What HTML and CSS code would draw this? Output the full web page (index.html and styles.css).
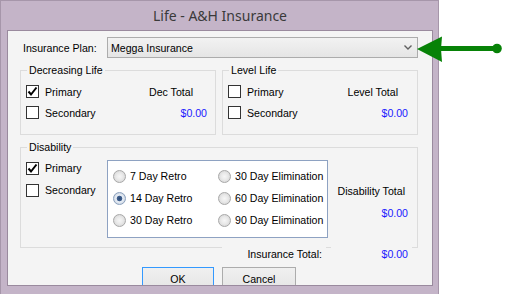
FILE: index.html
```html
<!DOCTYPE html>
<html lang="en">
<head>
    <meta charset="UTF-8">
    <title>Life - A&amp;H Insurance</title>
    <link rel="stylesheet" href="styles.css">
</head>
<body>
    <div class="window">
        <div class="titlebar">Life - A&amp;H Insurance</div>
        <div class="client">
            <div class="plan-row">
                <span class="plan-label">Insurance Plan:</span>
                <div class="combo">
                    <span>Megga Insurance</span>
                    <svg class="chevron" width="8" height="5" viewBox="0 0 8 5"><polyline points="0.5,0.5 4,4 7.5,0.5" fill="none" stroke="#606060" stroke-width="1.4"/></svg>
                </div>
            </div>

            <div class="groups">
                <fieldset class="group dec">
                    <legend>Decreasing Life</legend>
                    <div class="group-body">
                        <div class="row">
                            <label class="check"><span class="box"><svg width="11" height="11" viewBox="0 0 11 11"><polyline points="1.5,5.5 4,8.5 9.5,1.5" fill="none" stroke="#000" stroke-width="2"/></svg></span>Primary</label>
                            <span class="caption">Dec Total</span>
                        </div>
                        <div class="row">
                            <label class="check"><span class="box"></span>Secondary</label>
                            <span class="amount">$0.00</span>
                        </div>
                    </div>
                </fieldset>
                <fieldset class="group level">
                    <legend>Level Life</legend>
                    <div class="group-body">
                        <div class="row">
                            <label class="check"><span class="box"></span>Primary</label>
                            <span class="caption">Level Total</span>
                        </div>
                        <div class="row">
                            <label class="check"><span class="box"></span>Secondary</label>
                            <span class="amount">$0.00</span>
                        </div>
                    </div>
                </fieldset>
            </div>

            <fieldset class="group disability">
                <legend>Disability</legend>
                <div class="dis-body">
                    <div class="dis-checks">
                        <label class="check"><span class="box"><svg width="11" height="11" viewBox="0 0 11 11"><polyline points="1.5,5.5 4,8.5 9.5,1.5" fill="none" stroke="#000" stroke-width="2"/></svg></span>Primary</label>
                        <label class="check"><span class="box"></span>Secondary</label>
                    </div>
                    <div class="radio-panel">
                        <label class="opt"><span class="radio"></span>7 Day Retro</label>
                        <label class="opt"><span class="radio"></span>30 Day Elimination</label>
                        <label class="opt"><span class="radio on"></span>14 Day Retro</label>
                        <label class="opt"><span class="radio"></span>60 Day Elimination</label>
                        <label class="opt"><span class="radio"></span>30 Day Retro</label>
                        <label class="opt"><span class="radio"></span>90 Day Elimination</label>
                    </div>
                    <div class="dis-totals">
                        <span class="caption">Disability Total</span>
                        <span class="amount">$0.00</span>
                    </div>
                </div>
            </fieldset>

            <div class="grand-total">
                <span class="gt-label">Insurance Total:</span>
                <span class="gt-amount">$0.00</span>
            </div>

            <div class="buttons">
                <button class="btn ok">OK</button>
                <button class="btn cancel">Cancel</button>
            </div>
        </div>
    </div>

    <svg class="pointer" width="96" height="40" viewBox="0 0 96 40">
        <line x1="30" y1="18.5" x2="87" y2="18.5" stroke="#078207" stroke-width="5"/>
        <circle cx="87" cy="18.5" r="4.8" fill="#078207"/>
        <polygon points="7,19 32,6.5 31,19 32,32" fill="#078207"/>
    </svg>
</body>
</html>
```
FILE: styles.css
```css
* {
    box-sizing: border-box;
}
body {
    margin: 0;
    background: #fff;
    font-family: "Liberation Sans", Arial, sans-serif;
    font-size: 10.6px;
    color: #000;
}
.window {
    width: 439px;
    height: 294px;
    background: #c4b4c8;
    border: 1px solid #a696aa;
    border-bottom: none;
    padding: 0 5px 0 6px;
}
.titlebar {
    height: 29px;
    padding-top: 5px;
    text-align: center;
    font-family: "Noto Sans", sans-serif;
    font-size: 14px;
    line-height: 20px;
    color: #3a3a3a;
}
.client {
    height: 256px;
    border: 1px solid #9a8a9e;
    background: #f4f4f4;
    overflow: hidden;
    padding: 6px 0 0 12px;
}
.plan-row {
    display: flex;
    align-items: center;
    height: 21px;
}
.plan-label {
    width: 87px;
    padding-left: 3px;
}
.combo {
    width: 311px;
    height: 21px;
    border: 1px solid #acacac;
    background: linear-gradient(#f2f2f2, #e5e5e5);
    padding: 0 5px 0 3px;
    display: flex;
    align-items: center;
    justify-content: space-between;
}
.groups {
    display: grid;
    grid-template-columns: 196px 196px;
    column-gap: 6px;
    margin-top: 6px;
}
.group {
    margin: 0;
    padding: 0;
    min-width: 0;
    border: 1px solid #dcdcdc;
}
.group legend {
    margin-left: 6px;
    padding: 0 2px;
    line-height: 13px;
    height: 13px;
}
.dec, .level {
    height: 71px;
}
.group-body {
    padding: 4px 0 0 5px;
}
.row {
    display: flex;
    align-items: center;
    justify-content: space-between;
    height: 21px;
}
.check {
    display: flex;
    align-items: center;
    gap: 6px;
}
.box {
    width: 13px;
    height: 13px;
    border: 1px solid #333;
    background: #fff;
    display: flex;
    align-items: center;
    justify-content: center;
}
.amount {
    color: #1a1aff;
}
.dec .caption { margin-right: 22px; }
.dec .amount { margin-right: 8px; }
.level .caption { margin-right: 19px; }
.level .amount { margin-right: 9px; }

.disability {
    width: 398px;
    height: 107px;
    margin-top: 6px;
}
.dis-body {
    display: flex;
    padding-left: 5px;
}
.dis-checks {
    width: 81px;
    padding-top: 3px;
}
.dis-checks .check {
    height: 22px;
}
.radio-panel {
    width: 221px;
    height: 78px;
    margin-top: 6px;
    border: 1px solid #8ea2c2;
    background: #fff;
    display: grid;
    grid-template-columns: 105px 1fr;
    grid-auto-rows: 22px;
    padding: 4px 0 0 5px;
}
.opt {
    display: flex;
    align-items: center;
    gap: 4px;
}
.radio {
    width: 13px;
    height: 13px;
    border-radius: 50%;
    border: 1px solid #a8a8a8;
    background: radial-gradient(circle, #f6f6f6 0, #ebebeb 3px, #dadada 6px);
}
.radio.on {
    border-color: #8aa0bd;
    background: radial-gradient(circle, #2c4a75 0, #40608e 2.4px, #e8eef6 3.2px, #dde4ee 4.5px, #c9d2de 6px);
}
.dis-totals {
    flex: 1;
    display: flex;
    flex-direction: column;
    align-items: flex-end;
    padding-top: 30px;
    line-height: 14px;
}
.dis-totals .caption { margin-right: 12px; }
.dis-totals .amount { margin-right: 9px; margin-top: 8px; }

.grand-total {
    display: flex;
    gap: 5px;
    margin: -1px 0 0 202px;
    line-height: 14px;
}
.gt-label, .gt-amount {
    background: #f4f4f4;
    text-align: right;
    padding-right: 4px;
}
.gt-label { width: 104px; }
.gt-amount { width: 81px; color: #1a1aff; }

.buttons {
    display: flex;
    gap: 8px;
    margin: 6px 0 0 122px;
}
.btn {
    height: 23px;
    padding: 0;
    border: 1px solid #acacac;
    background: linear-gradient(#f0f0f0, #e5e5e5);
    font: inherit;
    color: #000;
}
.btn.ok {
    width: 72px;
    border-color: #3399ff;
}
.btn.cancel {
    width: 74px;
}
.pointer {
    position: absolute;
    left: 410px;
    top: 30px;
}
```
